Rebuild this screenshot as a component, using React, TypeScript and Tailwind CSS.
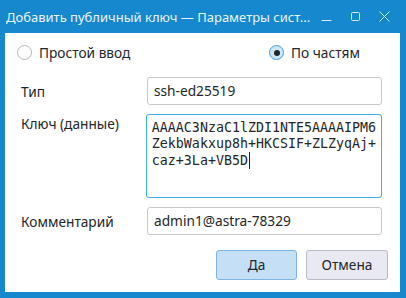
import { useState } from "react";

const sans = { fontFamily: '"Noto Sans", "Open Sans", sans-serif' };
const mono = { fontFamily: '"DejaVu Sans Mono", "Liberation Mono", monospace' };

function Radio({ label, checked }: { label: string; checked?: boolean }) {
  return (
    <div className="flex items-center gap-[7px]">
      {checked ? (
        <span className="flex h-[15px] w-[15px] items-center justify-center rounded-full border border-[#3d9fe0] bg-[#cde6f8]">
          <span className="h-[6px] w-[6px] rounded-full bg-[#232629]" />
        </span>
      ) : (
        <span className="h-[15px] w-[15px] rounded-full border border-[#b8b8b8] bg-white" />
      )}
      <span className="text-[13.7px] text-[#232629]">{label}</span>
    </div>
  );
}

function Field({
  label,
  top = false,
  children,
}: {
  label: string;
  top?: boolean;
  children: React.ReactNode;
}) {
  return (
    <div className="flex items-start">
      <div className={`w-[126px] text-[13.7px] text-[#232629] ${top ? "pt-0" : "pt-[5px]"}`}>
        {label}
      </div>
      <div className="flex-1">{children}</div>
    </div>
  );
}

export default function App() {
  const [mode] = useState("parts");
  return (
    <div className="flex h-[298px] w-[406px] flex-col bg-[#1688cd]" style={sans}>
      <div className="flex h-[33px] items-center pl-[6px] pr-[16px]">
        <span className="flex-1 truncate pt-[2px] text-[13px] text-[#eaf4fb]">
          Добавить публичный ключ — Параметры сист...
        </span>
        <div className="flex items-center gap-[18px] text-[#d6eaf7]">
          <svg width="11" height="11" viewBox="0 0 11 11">
            <path d="M0.5 9.5H10.5" stroke="currentColor" strokeWidth="1" />
          </svg>
          <svg width="11" height="11" viewBox="0 0 11 11">
            <rect x="1.5" y="1.5" width="8" height="8" rx="1" fill="none" stroke="currentColor" strokeWidth="1" />
          </svg>
          <svg width="11" height="11" viewBox="0 0 11 11">
            <path d="M0.5 0.5L10.5 10.5M10.5 0.5L0.5 10.5" stroke="currentColor" strokeWidth="1" />
          </svg>
        </div>
      </div>
      <div className="mb-[6px] ml-[5px] mr-[6px] flex flex-1 flex-col bg-white pl-[12px] pr-[18px]">
        <div className="flex h-[40px] items-center justify-between pr-[22px]">
          <Radio label="Простой ввод" checked={mode === "simple"} />
          <Radio label="По частям" checked={mode === "parts"} />
        </div>
        <div className="mt-[4px] flex flex-col gap-[9px] pl-[4px]">
          <Field label="Тип">
            <div className="flex h-[28px] items-center rounded-[3px] border border-[#c8c8c8] px-[6px] text-[13.7px] text-[#232629]">
              ssh-ed25519
            </div>
          </Field>
          <Field label="Ключ (данные)" top>
            <div
              className="h-[84px] rounded-[3px] border border-[#3daee9] px-[5px] pt-[5px] text-[13.3px] leading-[16px] text-[#232629]"
              style={mono}
            >
              <div>AAAAC3NzaC1lZDI1NTE5AAAAIPM6</div>
              <div>ZekbWakxup8h+HKCSIF+ZLZyqAj+</div>
              <div className="flex items-center">
                caz+3La+VB5D
                <span className="ml-[1px] inline-block h-[17px] w-[1px] bg-[#232629]" />
              </div>
            </div>
          </Field>
          <Field label="Комментарий">
            <div className="flex h-[28px] items-center rounded-[3px] border border-[#c8c8c8] px-[6px] text-[13.7px] text-[#232629]">
              admin1@astra-78329
            </div>
          </Field>
        </div>
        <div className="mt-[15px] flex justify-end gap-[9px]">
          <button className="h-[30px] w-[81px] rounded-[3px] border border-[#7db4e2] bg-[#c5e0f6] text-[13.7px] text-[#232629]">
            Да
          </button>
          <button className="-mr-[6px] h-[30px] w-[82px] rounded-[3px] border border-[#b9bcc5] bg-[#e8e9f3] text-[13.7px] text-[#232629]">
            Отмена
          </button>
        </div>
      </div>
    </div>
  );
}
